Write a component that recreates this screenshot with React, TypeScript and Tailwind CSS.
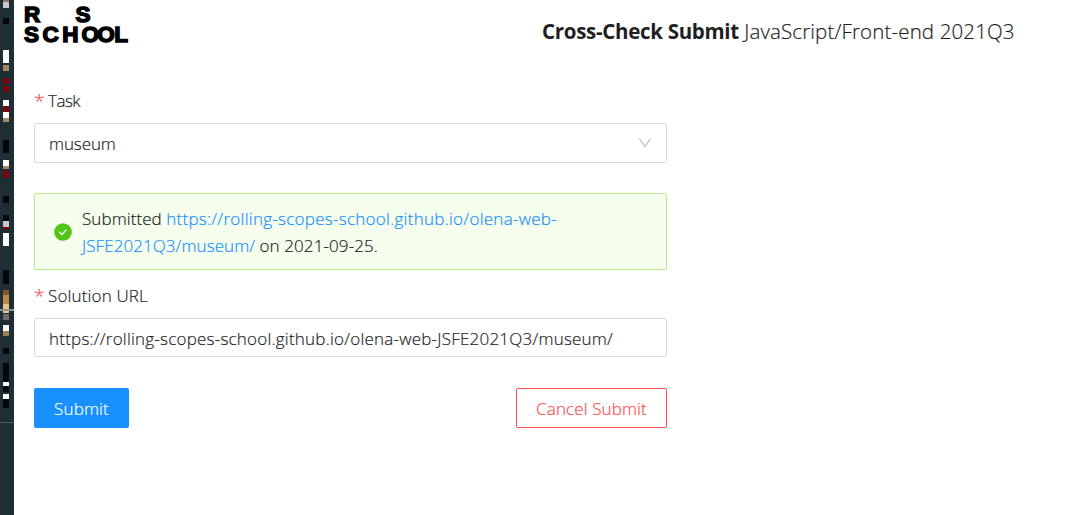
import React from "react";

type Block = [y: number, height: number, color: string];

const blocks: Block[] = [
  [0, 2, "#8c7a66"], [2, 6, "#c8c8c8"], [18, 6, "#050607"], [50, 13, "#ffffff"],
  [65, 6, "#a38a69"], [78, 6, "#7b040d"], [86, 6, "#7b040d"], [100, 6, "#ffffff"],
  [106, 6, "#7b040d"], [112, 6, "#ffffff"], [118, 4, "#a38a69"], [140, 13, "#050607"],
  [160, 6, "#ffffff"], [166, 3, "#a38a69"], [171, 7, "#7b040d"], [196, 7, "#050607"],
  [215, 6, "#050607"], [221, 6, "#c8c8c8"], [227, 2, "#7b040d"], [233, 13, "#ffffff"],
  [270, 14, "#050607"], [290, 5, "#805a2a"], [295, 9, "#bc8846"], [304, 9, "#e7c28b"],
  [314, 6, "#6b6b6b"], [325, 6, "#ffffff"], [331, 5, "#967e5f"], [348, 6, "#050607"],
  [363, 19, "#050607"], [382, 4, "#ffffff"], [386, 6, "#050607"], [394, 5, "#ffffff"],
  [399, 9, "#050607"],
];

function Strip() {
  return (
    <svg width="14" height="515" className="block shrink-0 bg-[#1f2d35]" shapeRendering="crispEdges">
      {blocks.map(([y, h, c]) => (
        <rect key={y} x="3" y={y} width="6" height={h} fill={c} />
      ))}
      <rect x="0" y="309" width="14" height="2" fill="#88949a" />
      <rect x="0" y="422" width="14" height="1" fill="#4b5960" />
    </svg>
  );
}

function Logo() {
  return (
    <svg
      width="110"
      height="50"
      className="block shrink-0"
      fontFamily="'Liberation Sans', Arial, sans-serif"
      fontWeight="700"
      fontSize="22.5"
      stroke="#000"
      strokeWidth="1.5"
    >
      <text x="2 53.5" y="21.5">RS</text>
      <text x="2 20.5 40.2 59.5 75.3 92.3" y="42">SCHOOL</text>
    </svg>
  );
}

function Label({ children }: { children: React.ReactNode }) {
  return (
    <div className="flex h-[30px] items-center leading-[30px]">
      <span className="w-[14px] text-[19px] text-[#ff4d4f]">*</span>
      {children}
    </div>
  );
}

export default function App() {
  return (
    <div className="flex h-[515px] w-[1069px] overflow-hidden bg-white font-['Open_Sans','Noto_Sans',sans-serif] text-[17px] font-light text-[#1f1f1f] [-webkit-text-stroke:0.2px]">
      <Strip />
      <main className="flex flex-1 flex-col pl-2">
        <header className="flex h-[62px]">
          <Logo />
          <h1 className="ml-[410px] mt-[15px] whitespace-nowrap text-[20.5px] leading-8">
            <span className="font-bold tracking-[-0.3px] [-webkit-text-stroke:0px]">Cross-Check Submit</span>{" "}
            <span className="tracking-[0.14px]">JavaScript/Front-end 2021Q3</span>
          </h1>
        </header>
        <form className="ml-3 mt-6 w-[633px]">
          <Label><span className="tracking-[-0.5px]">Task</span></Label>
          <div className="mt-[7px] flex h-10 items-center justify-between rounded-[2px] border border-[#d9d9d9] pl-[14px] pr-[14px]">
            <span className="pt-0.5 tracking-[-0.1px]">museum</span>
            <svg width="14" height="14" viewBox="0 0 14 14" fill="none" stroke="#bfbfbf" strokeWidth="1.3">
              <path d="M1.3 2.5 7 10.7l5.7-8.2" />
            </svg>
          </div>
          <div className="mt-[30px] flex h-[77px] items-center rounded-[2px] border border-[#b7eb8f] bg-[#f6ffed] pl-[19px]">
            <svg width="18" height="18" viewBox="0 0 18 18" className="mr-[10px] shrink-0">
              <circle cx="9" cy="9" r="8.8" fill="#52c41a" />
              <path d="m5.4 8.8 2.5 2.8 4.5-5" fill="none" stroke="#fff" strokeWidth="1.3" />
            </svg>
            <p className="whitespace-nowrap leading-[27px]">
              <span className="tracking-[0.07px]">Submitted</span>{" "}
              <a className="tracking-[0.27px] text-[#1890ff]">https://rolling-scopes-school.github.io/olena-web-</a>
              <br />
              <a className="tracking-[0.07px] text-[#1890ff]">JSFE2021Q3/museum/</a>{" "}
              <span className="tracking-[0.1px]">on 2021-09-25.</span>
            </p>
          </div>
          <div className="mt-[11px]">
            <Label><span className="tracking-[0.15px]">Solution URL</span></Label>
          </div>
          <div className="mt-[7px] flex h-[39px] items-center rounded-[2px] border border-[#d9d9d9] pl-[14px]">
            <span className="pt-0.5 tracking-[0.22px]">https://rolling-scopes-school.github.io/olena-web-JSFE2021Q3/museum/</span>
          </div>
          <div className="mt-[31px] flex justify-between">
            <button type="button" className="h-10 w-[95px] rounded-[2px] bg-[#1890ff] pt-0.5 tracking-[0.15px] text-white">
              Submit
            </button>
            <button type="button" className="h-10 w-[151px] whitespace-nowrap rounded-[2px] border border-[#ff4d4f] pt-0.5 tracking-[0.12px] text-[#ff4d4f]">
              Cancel Submit
            </button>
          </div>
        </form>
      </main>
    </div>
  );
}
